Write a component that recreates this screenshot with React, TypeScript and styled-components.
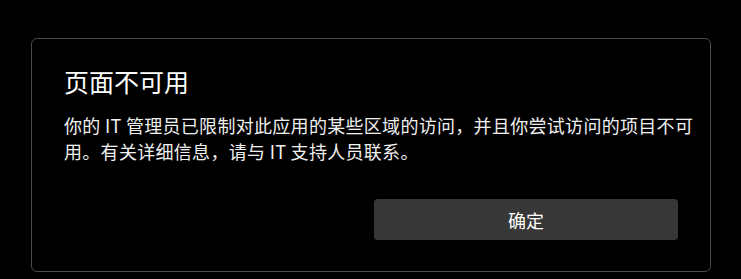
import styled, { createGlobalStyle } from "styled-components";

const GlobalStyle = createGlobalStyle`
  html, body {
    margin: 0;
    padding: 0;
    background: #000;
    overflow: hidden;
  }
  body {
    font-family: "Noto Sans CJK SC", "Noto Sans", sans-serif;
    color: #fff;
  }
`;

const Page = styled.div`
  width: 741px;
  height: 279px;
  padding: 38px 0 0 31px;
  box-sizing: border-box;
  background: #000;
`;

const Dialog = styled.section`
  width: 680px;
  height: 234px;
  box-sizing: border-box;
  border: 1px solid #4b4b4b;
  border-radius: 6px;
  padding: 26px 32px 31px 32px;
  display: flex;
  flex-direction: column;
`;

const Title = styled.h2`
  margin: 0;
  font-size: 25px;
  line-height: 32px;
  font-weight: 400;
  color: #fff;
`;

const Message = styled.p`
  margin: 15px -18px 0 0;
  font-size: 18px;
  line-height: 26px;
  letter-spacing: 0.3px;
  color: #f0f0f0;
`;

const Footer = styled.div`
  margin-top: auto;
  display: flex;
  justify-content: flex-end;
`;

const Button = styled.button`
  width: 304px;
  height: 41px;
  border: none;
  border-radius: 4px;
  background: #373737;
  color: #fff;
  font-family: inherit;
  font-size: 18px;
  cursor: pointer;

  &:hover {
    background: #404040;
  }
`;

const App = () => {
  return (
    <>
      <GlobalStyle />
      <Page>
        <Dialog role="dialog">
          <Title>页面不可用</Title>
          <Message>
            你的 IT 管理员已限制对此应用的某些区域的访问，并且你尝试访问的项目不可用。有关详细信息，请与 IT 支持人员联系。
          </Message>
          <Footer>
            <Button>确定</Button>
          </Footer>
        </Dialog>
      </Page>
    </>
  );
};

export default App;
